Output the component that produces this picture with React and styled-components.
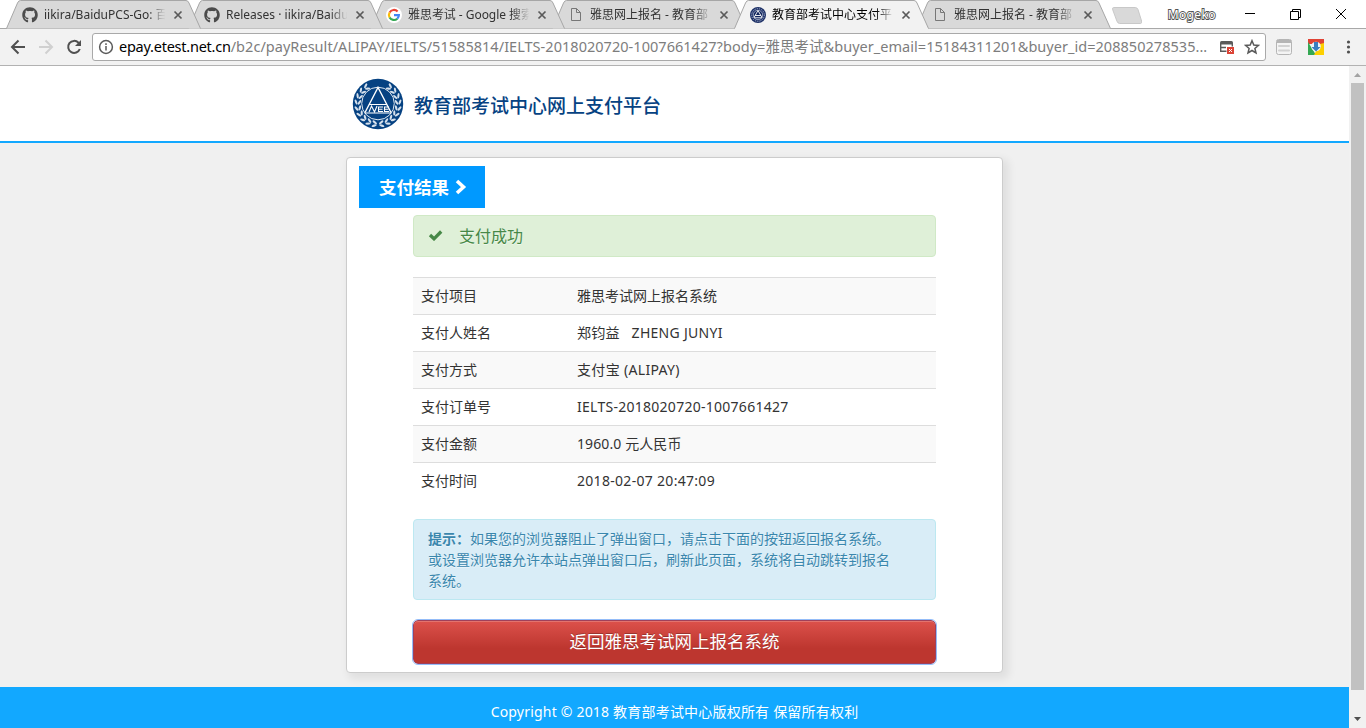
import React from 'react';
import styled, { createGlobalStyle, css } from 'styled-components';
import { FaGithub } from 'react-icons/fa';

const GlobalStyle = createGlobalStyle`
  * { box-sizing: border-box; }
  body { margin: 0; overflow: hidden; background: #fff; }
  body, button { font-family: "Noto Sans", "Noto Sans CJK SC", sans-serif; }
`;

const Window = styled.div`
  width: 1366px;
  height: 728px;
  display: flex;
  flex-direction: column;
  overflow: hidden;
`;

/* ---------- tab strip ---------- */
const TabStrip = styled.div`
  height: 28px;
  flex: none;
  display: flex;
  padding-left: 6px;
  position: relative;
  background: #fff;
`;
const TabBox = styled.div`
  width: 195px;
  height: 29px;
  flex: none;
  margin-right: -13px;
  padding: 1px 17px 0 16px;
  display: flex;
  align-items: center;
  position: relative;
  z-index: ${(p) => p.$layer};
`;
const TabShape = styled.svg`
  position: absolute;
  left: 0;
  top: 0;
`;
const Favicon = styled.span`
  width: 16px;
  height: 16px;
  margin-right: 6px;
  display: flex;
  flex: none;
  position: relative;
  color: #4b4b4b;
`;
const TabTitle = styled.span`
  width: 124px;
  position: relative;
  overflow: hidden;
  white-space: nowrap;
  font-size: 12px;
  line-height: 20px;
  letter-spacing: ${(p) => p.$track || 0}px;
  color: ${(p) => (p.$active ? '#000' : '#333')};
  mask-image: linear-gradient(to right, #000 84%, transparent 98%);
`;
const CloseGlyph = styled.svg`
  position: relative;
  margin-left: 5px;
  flex: none;
`;
const NewTab = styled.svg`
  margin: 6px 0 0 8px;
  flex: none;
`;
const WindowTools = styled.div`
  margin-left: auto;
  display: flex;
  align-items: center;
  height: 28px;
  padding-right: 20px;
`;
const UserName = styled.span`
  margin: 2px 28px 0 0;
  font-size: 12px;
  line-height: 18px;
  letter-spacing: 0.4px;
  color: #fff;
  -webkit-text-stroke: 1.8px #555;
  paint-order: stroke fill;
`;

/* ---------- toolbar ---------- */
const Toolbar = styled.div`
  height: 38px;
  flex: none;
  display: flex;
  align-items: center;
  border-top: 1px solid #a8a8a8;
  border-bottom: 1px solid #b2b2b2;
  background: #f2f2f2;
  padding: 0 10px;
`;
const NavIcons = styled.div`
  width: 82px;
  display: flex;
  gap: 12px;
`;
const Omnibox = styled.div`
  width: 1174px;
  height: 28px;
  display: flex;
  align-items: center;
  border: 1px solid #a9a9a9;
  border-radius: 3px;
  background: #fff;
  padding: 0 5px 0 5px;
`;
const Url = styled.div`
  width: 1094px;
  margin: 0 0 2px 5px;
  font-size: 14.5px;
  line-height: 24px;
  white-space: nowrap;
  color: #7d7d7d;
`;
const Host = styled.span`
  color: #000;
  letter-spacing: -0.24px;
`;
const Path = styled.span`
  letter-spacing: 0.035px;
`;
const OmniIcons = styled.div`
  display: flex;
  gap: 9px;
  margin-left: auto;
`;
const ExtensionIcons = styled.div`
  display: flex;
  align-items: center;
  margin-left: 10px;
  gap: 16px;
`;

/* ---------- page ---------- */
const Viewport = styled.div`
  flex: 1;
  display: flex;
  min-height: 0;
`;
const Page = styled.div`
  width: 1349px;
  background: #f0f0f0;
  display: flex;
  flex-direction: column;
`;
const Header = styled.header`
  height: 77px;
  flex: none;
  border-bottom: 2px solid #12a8ff;
  background: #fff;
  display: flex;
  align-items: center;
  padding: 0 0 0 352px;
`;
const SiteName = styled.h1`
  margin: 4px 0 0 10px;
  font-size: 19px;
  line-height: 28px;
  font-weight: 500;
  color: #064282;
`;
const Card = styled.main`
  width: 657px;
  height: 516px;
  flex: none;
  margin: 14px 0 0 346px;
  border: 1px solid #ccc;
  border-radius: 4px;
  background: #fff;
  box-shadow: 4px 4px 8px 2px rgba(0, 0, 0, 0.07);
  padding: 8px 12px 0;
`;
const Ribbon = styled.h2`
  margin: 0;
  width: 126px;
  height: 42px;
  display: flex;
  align-items: center;
  padding: 0 0 1px 20px;
  gap: 6px;
  background: #09f;
  color: #fff;
  font-size: 17.5px;
  font-weight: 700;
  white-space: nowrap;
`;
const Body = styled.div`
  width: 523px;
  margin: 7px 0 0 54px;
`;
const box = css`
  border: 1px solid;
  border-radius: 4px;
  text-shadow: 0 1px 0 rgba(255, 255, 255, 0.5);
`;
const Success = styled.div`
  ${box}
  height: 42px;
  display: flex;
  align-items: center;
  gap: 16px;
  padding: 0 0 2px 14px;
  border-color: #d0e9c6;
  background: #dff0d8;
  color: #468847;
  font-size: 16px;
`;
const Details = styled.dl`
  margin: 20px 0 0;
`;
const Row = styled.div`
  height: 37px;
  display: flex;
  align-items: center;
  border-top: 1px solid #ddd;
  padding-left: 8px;
  font-size: 14px;
  line-height: 20px;
  color: #333;
  background: ${(p) => (p.$striped ? '#f9f9f9' : '#fff')};
`;
const Term = styled.dt`
  width: 156px;
`;
const Value = styled.dd`
  margin: 0;
  white-space: pre;
  letter-spacing: ${(p) => p.$track || 0}px;
`;
const Notice = styled.p`
  ${box}
  margin: 20px 0 0;
  height: 81px;
  padding: 8px 35px 8px 14px;
  border-color: #bce8f1;
  background: #d9edf7;
  color: #3a87ad;
  font-size: 14px;
  line-height: 21px;
`;
const ReturnButton = styled.button`
  display: block;
  width: 523px;
  height: 44px;
  margin: 20px 0 0;
  padding: 0 0 2px;
  border: 1px solid #a0405a;
  border-radius: 5px;
  background: linear-gradient(#dc514b, #bd362f 65%);
  box-shadow: inset 0 1px 0 rgba(255, 255, 255, 0.2);
  outline: 1px solid #94bcf8;
  color: #fff;
  font-size: 17.5px;
  line-height: 40px;
  text-shadow: 0 -1px 0 rgba(0, 0, 0, 0.25);
`;
const Footer = styled.footer`
  flex: 1;
  margin-top: 14px;
  padding-top: 15px;
  background: #12a8ff;
  color: #fff;
  text-align: center;
  font-size: 14px;
  line-height: 20px;
  letter-spacing: 0.2px;
`;
const Scrollbar = styled.div`
  width: 17px;
  background: #f1f1f1;
  display: flex;
  flex-direction: column;
  align-items: center;
`;
const ScrollArrow = styled.svg`
  flex: none;
`;
const Thumb = styled.div`
  width: 13px;
  height: 607px;
  margin-bottom: 21px;
  flex: none;
  background: #c1c1c1;
`;

function Leaf({ x, y, r }) {
  return <ellipse cx={x} cy={y} rx="1.1" ry="2.7" transform={`rotate(${r} ${x} ${y})`} />;
}

function Emblem({ size }) {
  const leaves = [];
  for (let i = 0; i < 9; i++) {
    const a = 100 + i * 17;
    const rad = (a * Math.PI) / 180;
    for (const s of [1, -1]) {
      const cx = 26 + s * 22 * Math.cos(rad);
      const cy = 26 + 22 * Math.sin(rad);
      const ix = 26 + s * 18.6 * Math.cos(rad);
      const iy = 26 + 18.6 * Math.sin(rad);
      leaves.push(<Leaf key={`o${i}${s}`} x={cx} y={cy} r={s * (a - 28)} />);
      leaves.push(<Leaf key={`i${i}${s}`} x={ix} y={iy} r={s * (a + 28)} />);
    }
  }
  return (
    <svg width={size} height={size} viewBox="0 0 52 52">
      <circle cx="26" cy="26" r="25.2" fill="#064282" />
      <g fill="#d5e0ec">{leaves}</g>
      <circle cx="26" cy="25.500" r="16.3" fill="#064282" stroke="#dfe8f1" strokeWidth="1" />
      <path d="M13 34.500 26 9.500 39 34.500" fill="none" stroke="#fff" strokeWidth="1.400" />
      <path d="M17 26.500H35M12.500 35H39.500" stroke="#fff" strokeWidth="1.100" />
      <path d="M17 34 19.500 28 22.500 34 25 28M31 29H26.500V33.500H31M26.500 31.200H30.500M37 29H32.500V33.500H37M32.500 31.200H36.500" fill="none" stroke="#fff" strokeWidth="1.100" />
    </svg>
  );
}

const SmallEmblem = () => (
  <svg width="16" height="16" viewBox="0 0 16 16">
    <circle cx="8" cy="8" r="8" fill="#1c2f66" />
    <circle cx="8" cy="8" r="6.300" fill="none" stroke="#a9b5d0" strokeWidth="1" strokeDasharray="1.300 1" />
    <circle cx="8" cy="8" r="4.700" fill="#10245c" stroke="#c7d0e2" strokeWidth=".7" />
    <path d="M4 10.500 8 3.500 12 10.500M5 8.500H11M4 10.800H12" fill="none" stroke="#fff" strokeWidth=".9" />
  </svg>
);
const GoogleIcon = () => (
  <svg width="16" height="16" viewBox="0 0 16 16">
    <circle cx="8" cy="8" r="8" fill="#fff" />
    <g fill="none" strokeWidth="2.200">
      <path d="M3.600 5.500A5 5 0 0 1 11.600 4.500" stroke="#ea4335" />
      <path d="M3.600 5.500A5 5 0 0 0 3.600 10.500" stroke="#fbbc05" />
      <path d="M3.600 10.500A5 5 0 0 0 11.300 11.700" stroke="#34a853" />
      <path d="M11.300 11.700A5 5 0 0 0 12.900 8.100H8" stroke="#4285f4" />
    </g>
  </svg>
);
const DocIcon = () => (
  <svg width="16" height="16" fill="none" stroke="#777">
    <path d="M3.500 1.500H8.500L12.500 5.500V13.500H3.500zM8.500 1.500V5.500H12.500" />
  </svg>
);

const icons = {
  github: <FaGithub size={16} />,
  google: <GoogleIcon />,
  doc: <DocIcon />,
  emblem: <SmallEmblem />,
};

const tabs = [
  { icon: 'github', title: 'iikira/BaiduPCS-Go: 百' },
  { icon: 'github', title: 'Releases · iikira/Baidu' },
  { icon: 'google', title: '雅思考试 - Google 搜索', track: -0.05 },
  { icon: 'doc', title: '雅思网上报名 - 教育部' },
  { icon: 'emblem', title: '教育部考试中心支付平', active: true },
  { icon: 'doc', title: '雅思网上报名 - 教育部' },
];

function Tab({ icon, title, track, active, layer }) {
  return (
    <TabBox $layer={layer}>
      <TabShape width="195" height="29">
        <path
          d="M.5 28.500 11.500 3Q12.500 .5 14.500 .5H180Q182 .5 183 3L194.500 28.500"
          fill={active ? '#f2f2f2' : '#d9d9d9'}
          stroke="#a6a6a6"
        />
        {active && <path d="M1 28.500H194" stroke="#f2f2f2" />}
      </TabShape>
      <Favicon>{icons[icon]}</Favicon>
      <TabTitle $active={active} $track={track}>{title}</TabTitle>
      <CloseGlyph width="10" height="10">
        <path d="M1.500 1.500 8.500 8.500M8.500 1.500 1.500 8.500" stroke="#5a5a5a" strokeWidth="1.700" />
      </CloseGlyph>
    </TabBox>
  );
}

const rows = [
  ['支付项目', '雅思考试网上报名系统', 0],
  ['支付人姓名', '郑钧益   ZHENG JUNYI', 0.28],
  ['支付方式', '支付宝 (ALIPAY)', 0.33],
  ['支付订单号', 'IELTS-2018020720-1007661427', 0.27],
  ['支付金额', '1960.0 元人民币', 0.1],
  ['支付时间', '2018-02-07 20:47:09', 0.3],
];

export default function App() {
  return (
    <Window>
      <GlobalStyle />
      <TabStrip>
        {tabs.map((t, i) => <Tab key={i} {...t} layer={t.active ? 10 : tabs.length - i} />)}
        <NewTab width="36" height="20">
          <path d="M3 1.500H27Q29 1.500 30 3.500L34 15Q34.500 17.500 33 17.500H9.500Q7.500 17.500 6.500 15L2 4Q1 1.500 3 1.500z" transform="translate(5 0) scale(.9 1)" fill="#d9d9d9" stroke="#c6c6c6" />
        </NewTab>
        <WindowTools>
          <UserName>Mogeko</UserName>
          <svg width="102" height="12" fill="none" stroke="#000" strokeWidth="1">
            <path d="M1 5.500H11M46.500 3.500H54.500V11.500H46.500zM48.500 3.500V1.500H56.500V9.500H54.500M92 1 102 11M102 1 92 11" />
          </svg>
        </WindowTools>
      </TabStrip>
      <Toolbar>
        <NavIcons>
          <svg width="16" height="16" fill="none" stroke="#505050" strokeWidth="2"><path d="M15 8H2.500M8.500 1.500 2 8 8.500 14.500" /></svg>
          <svg width="16" height="16" fill="none" stroke="#d0d0d0" strokeWidth="2"><path d="M1 8H13.500M7.500 1.500 14 8 7.500 14.500" /></svg>
          <svg width="16" height="16"><path d="M13.800 10A6 6 0 1 1 12.500 3.700L14 5.200" fill="none" stroke="#505050" strokeWidth="2" /><path d="M15 1V7H9z" fill="#505050" /></svg>
        </NavIcons>
        <Omnibox>
          <svg width="16" height="16" fill="none" stroke="#5a5a5a" strokeWidth="1.500"><circle cx="8" cy="8" r="6.400" /><path d="M8 7V11.500M8 4.300V6" /></svg>
          <Url>
            <Host>epay.etest.net.cn</Host>
            <Path>/b2c/payResult/ALIPAY/IELTS/51585814/IELTS-2018020720-1007661427?body=雅思考试&amp;buyer_email=15184311201&amp;buyer_id=208850278535...</Path>
          </Url>
          <OmniIcons>
            <svg width="16" height="16"><path d="M1 5V3.500Q1 2 2.500 2H12.500Q14 2 14 3.500V5.500H1z" fill="#5a5a5a" /><path d="M1.700 5V12.300H7.500M1 8.500H7M13.300 5V7.500" fill="none" stroke="#5a5a5a" strokeWidth="1.400" /><path d="M8 8H15V15H8z" fill="#db4437" /><path d="M10 10 13 13M13 10 10 13" stroke="#fff" /></svg>
            <svg width="16" height="16" viewBox="0 0 16 16"><path d="M8 1.700 9.800 6.100 14.400 6.400 10.900 9.400 12 14 8 11.500 4 14 5.100 9.400 1.600 6.400 6.200 6.100z" fill="none" stroke="#5a5a5a" strokeWidth="1.500" /></svg>
          </OmniIcons>
        </Omnibox>
        <ExtensionIcons>
          <svg width="16" height="16" fill="none" stroke="#b5b5b5"><rect x=".5" y=".5" width="15" height="15" rx="2" fill="#f4f4f4" /><path d="M1 2.500H15" strokeWidth="3" /><path d="M3 7H13M3 11.500H13" stroke="#d2d2d2" strokeWidth="2" strokeLinecap="round" /></svg>
          <svg width="16" height="16"><path d="M0 0H16V5H0z" fill="#e04335" /><path d="M0 3 8 16H0z" fill="#34a853" /><path d="M16 4V16H6L12 5z" fill="#fdd000" /><circle cx="8" cy="7.500" r="4.800" fill="#eef3f7" /><path d="M6 3H10V8H12.500L8 12.500 3.500 8H6z" fill="#3a7dc0" /></svg>
          <svg width="16" height="16" fill="#505050"><circle cx="8.500" cy="3" r="1.600" /><circle cx="8.500" cy="8" r="1.600" /><circle cx="8.500" cy="13" r="1.600" /></svg>
        </ExtensionIcons>
      </Toolbar>
      <Viewport>
        <Page>
          <Header>
            <Emblem size={52} />
            <SiteName>教育部考试中心网上支付平台</SiteName>
          </Header>
          <Card>
            <Ribbon>
              支付结果
              <svg width="12" height="16"><path d="M2 2 8.500 8 2 14" fill="none" stroke="#fff" strokeWidth="3.600" /></svg>
            </Ribbon>
            <Body>
              <Success>
                <svg width="15" height="12"><path d="M2 6 6 9.800 13.200 2.500" fill="none" stroke="#468847" strokeWidth="3.300" /></svg>
                支付成功
              </Success>
              <Details>
                {rows.map(([term, value, track], i) => (
                  <Row key={term} $striped={i % 2 === 0}>
                    <Term>{term}</Term>
                    <Value $track={track}>{value}</Value>
                  </Row>
                ))}
              </Details>
              <Notice>
                <strong>提示：</strong>如果您的浏览器阻止了弹出窗口，请点击下面的按钮返回报名系统。<br />
                或设置浏览器允许本站点弹出窗口后，刷新此页面，系统将自动跳转到报名系统。
              </Notice>
              <ReturnButton>返回雅思考试网上报名系统</ReturnButton>
            </Body>
          </Card>
          <Footer>Copyright © 2018 教育部考试中心版权所有 保留所有权利</Footer>
        </Page>
        <Scrollbar>
          <ScrollArrow width="17" height="17"><path d="M5 11 8.500 7 12 11z" fill="#a3a3a3" /></ScrollArrow>
          <Thumb />
          <ScrollArrow width="17" height="17"><path d="M5 6 8.500 10 12 6z" fill="#505050" /></ScrollArrow>
        </Scrollbar>
      </Viewport>
    </Window>
  );
}
